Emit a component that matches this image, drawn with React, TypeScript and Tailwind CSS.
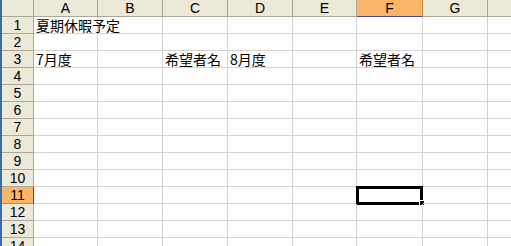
import React from "react";

const cols = [
  { k: "A", w: 64 },
  { k: "B", w: 65 },
  { k: "C", w: 65 },
  { k: "D", w: 65 },
  { k: "E", w: 64 },
  { k: "F", w: 66 },
  { k: "G", w: 65 },
  { k: "", w: 65 },
];

const data: Record<string, string> = {
  "1A": "夏期休暇予定",
  "3A": "7月度",
  "3C": "希望者名",
  "3D": "8月度",
  "3F": "希望者名",
};

const font = { fontFamily: '"MS PGothic","Noto Sans CJK JP","Liberation Sans",sans-serif' };
const hfont = { fontFamily: '"Liberation Sans",Arial,sans-serif' };

export default function App() {
  const rows = Array.from({ length: 14 }, (_, i) => i + 1);
  return (
    <div className="flex h-[246px] w-[511px] overflow-hidden bg-white" style={font}>
      <div className="w-[2px] shrink-0 bg-[#3a6ea5]" />
      <div className="flex flex-col">
        <div className="flex h-[17px] shrink-0" style={hfont}>
          <div className="h-[17px] w-[32px] shrink-0 border-b border-r border-[#aca899] bg-[#ece9d8]" />
          {cols.map((c, i) => (
            <div
              key={i}
              style={{ width: c.w }}
              className={
                c.k === "F"
                  ? "flex h-[17px] shrink-0 items-center justify-center border-b border-r border-b-[#4b4b8c] border-r-[#c88a3c] bg-[#f9b668] text-[14px] leading-[16px] text-black"
                  : "flex h-[17px] shrink-0 items-center justify-center border-b border-r border-[#aca899] bg-[#ece9d8] text-[14px] leading-[16px] text-black"
              }
            >
              {c.k}
            </div>
          ))}
        </div>
        {rows.map((r) => (
          <div key={r} className="flex h-[17px] shrink-0">
            <div
              style={hfont}
              className={
                r === 11
                  ? "flex h-[17px] w-[32px] shrink-0 items-center justify-center border-b border-r border-b-[#c88a3c] border-r-[#4b4b8c] bg-[#f9b668] text-[14px] leading-[16px] text-black"
                  : "flex h-[17px] w-[32px] shrink-0 items-center justify-center border-b border-r border-[#aca899] bg-[#ece9d8] text-[14px] leading-[16px] text-black"
              }
            >
              {r}
            </div>
            {cols.map((c, i) => {
              const v = data[`${r}${c.k}`];
              const sel = r === 11 && c.k === "F";
              return (
                <div
                  key={i}
                  style={{ width: c.w }}
                  className="relative flex h-[17px] shrink-0 items-center whitespace-nowrap border-b border-r border-[#d4d4d4] pl-[2px] text-[14px] leading-none text-black"
                >
                  {v && <span className="relative z-10">{v}</span>}
                  {sel && (
                    <>
                      <div className="absolute left-[-1px] top-[-1px] h-[19px] w-[67px] border-[3px] border-black" />
                      <div className="absolute right-[-3px] bottom-[-3px] h-[6px] w-[6px] border border-white bg-black" />
                    </>
                  )}
                </div>
              );
            })}
          </div>
        ))}
      </div>
    </div>
  );
}
